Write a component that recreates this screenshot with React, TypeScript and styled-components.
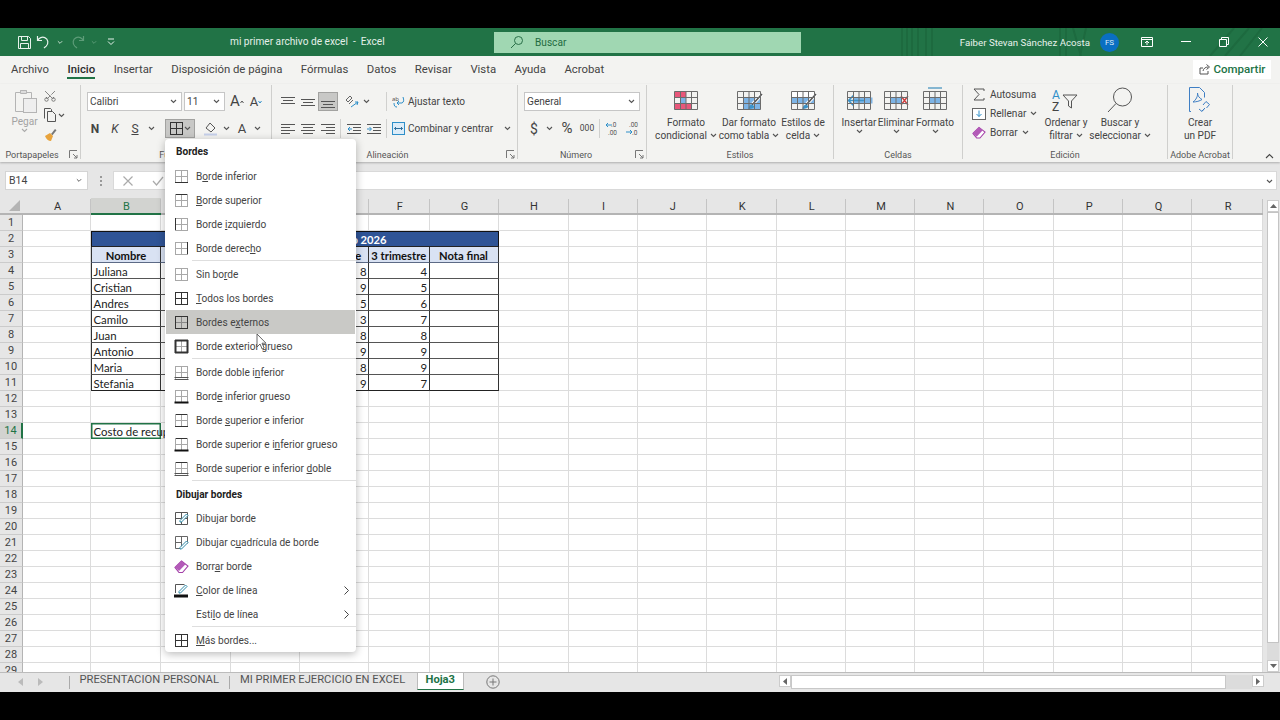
import React from 'react';
import styled, { createGlobalStyle } from 'styled-components';
import { Scissors } from 'lucide-react';

const UI = `"Roboto", "Noto Sans", sans-serif`;
const GREEN = '#217346';

const Global = createGlobalStyle`
    html, body { margin: 0; padding: 0; background: #000; overflow: hidden; }
    * { box-sizing: border-box; }
    u { text-underline-offset: 1px; text-decoration-thickness: 1px; }
`;

const Chev = ({ c = '#555', w = 7 }: { c?: string; w?: number }) => (
    <svg width={w} height={5} viewBox="0 0 7 5" fill="none">
        <path d="M1 1l2.5 2.5L6 1" stroke={c} strokeWidth="1.1" />
    </svg>
);

/* ---------- title bar ---------- */
const TitleBar = styled.div`
    position: relative;
    height: 28px;
    background: ${GREEN};
    display: flex;
    align-items: center;
    color: #fff;
    font-family: ${UI};
    font-size: 10.15px;
    overflow: hidden;
`;
const TitlePattern = styled.svg`
    position: absolute;
    left: 880px;
    top: 0;
    pointer-events: none;
`;
const Qat = styled.div`
    width: 230px;
    padding-left: 16px;
    display: flex;
    align-items: center;
    position: relative;
`;
const QatItem = styled.div<{ $w: number }>`
    width: ${(p) => p.$w}px;
    display: flex;
    align-items: center;
    justify-content: center;
`;
const DocTitle = styled.div`
    width: 264px;
    position: relative;
    white-space: pre;
    color: #e4f0e9;
    margin-top: -2px;
`;
const SearchBox = styled.div`
    width: 307px;
    height: 21px;
    background: #a0d7b2;
    display: flex;
    align-items: center;
    gap: 11px;
    padding-left: 16px;
    color: #1f6b40;
    position: relative;
`;
const TitleRight = styled.div`
    margin-left: auto;
    margin-right: -2px;
    display: flex;
    align-items: center;
    position: relative;
`;
const UserName = styled.div`
    color: #e8f2ec;
    font-size: 9.7px;
    white-space: nowrap;
`;
const Avatar = styled.div`
    width: 19px;
    height: 19px;
    margin-left: 10px;
    margin-right: 9px;
    border-radius: 50%;
    background: #0a6fc2;
    color: #dcecf8;
    font-size: 8px;
    display: flex;
    align-items: center;
    justify-content: center;
`;
const WinBtn = styled.div`
    width: 38.5px;
    display: flex;
    justify-content: center;
`;

/* ---------- menu tabs ---------- */
const TabsRow = styled.div`
    height: 28px;
    background: #f3f3f1;
    display: flex;
    align-items: center;
    gap: 18.5px;
    padding: 0 9px 3px 11px;
    font-family: ${UI};
    font-size: 11.35px;
    color: #444;
`;
const MenuTab = styled.div<{ $active?: boolean }>`
    position: relative;
    white-space: nowrap;
    font-weight: ${(p) => (p.$active ? 500 : 400)};
    color: ${(p) => (p.$active ? '#2b2b2b' : '#444')};
    ${(p) =>
        p.$active &&
        `&::after { content: ''; position: absolute; left: 0; right: 0; bottom: -3px; height: 2px; background: ${GREEN}; }`}
`;
const ShareBtn = styled.div`
    margin-left: auto;
    width: 78px;
    height: 19px;
    background: #fff;
    display: flex;
    align-items: center;
    justify-content: center;
    gap: 3px;
    font-weight: 500;
    font-size: 11.5px;
    color: ${GREEN};
    margin-top: 1px;
`;

/* ---------- ribbon ---------- */
const Ribbon = styled.div`
    height: 78px;
    background: #f3f3f1;
    display: flex;
    font-family: ${UI};
    font-size: 10.1px;
    color: #444;
    box-shadow: 0 1px 2px rgba(0, 0, 0, 0.25);
    position: relative;
    z-index: 1;
`;
const Group = styled.div<{ $w: number }>`
    width: ${(p) => p.$w}px;
    height: 74px;
    margin-top: 1px;
    border-right: 1px solid #cfcfcd;
    display: flex;
    flex-direction: column;
    position: relative;
    flex: none;
`;
const GroupBody = styled.div<{ $pl?: number }>`
    height: 62px;
    flex: none;
    display: flex;
    padding-left: ${(p) => p.$pl ?? 0}px;
`;
const GroupRows = styled.div`
    height: 62px;
    flex: none;
    display: flex;
    flex-direction: column;
    padding-top: 7px;
    gap: 8px;
`;
const ToolRow = styled.div<{ $pl?: number }>`
    height: 19px;
    display: flex;
    align-items: center;
    padding-left: ${(p) => p.$pl ?? 0}px;
`;
const GroupLabel = styled.div<{ $pr?: number }>`
    height: 12px;
    padding-right: ${(p) => p.$pr ?? 0}px;
    text-align: center;
    font-size: 9px;
    line-height: 16px;
    color: #555;
    white-space: nowrap;
`;
const Launcher = styled.svg`
    position: absolute;
    right: 2px;
    bottom: 0;
`;
const Tool = styled.div<{ $w: number; $on?: boolean; $ml?: number }>`
    width: ${(p) => p.$w}px;
    height: 19px;
    flex: none;
    margin-left: ${(p) => p.$ml ?? 0}px;
    display: flex;
    align-items: center;
    justify-content: center;
    background: ${(p) => (p.$on ? '#c8c8c6' : 'transparent')};
    border: ${(p) => (p.$on ? '1px solid #a2a2a0' : 'none')};
`;
const Select = styled.div<{ $w: number }>`
    width: ${(p) => p.$w}px;
    height: 19px;
    flex: none;
    margin-right: 2px;
    background: #fff;
    border: 1px solid #c6c6c6;
    padding: 0 4px 0 2px;
    display: flex;
    align-items: center;
    justify-content: space-between;
    color: #444;
`;
const VSep = styled.div<{ $ml?: number; $mr?: number }>`
    width: 1px;
    height: 19px;
    flex: none;
    margin-left: ${(p) => p.$ml ?? 2}px;
    margin-right: ${(p) => p.$mr ?? 2}px;
    background: #d0d0ce;
`;
const LetterTool = styled.span<{ $size?: number; $weight?: number; $italic?: boolean; $under?: boolean }>`
    font-size: ${(p) => p.$size ?? 12}px;
    font-weight: ${(p) => p.$weight ?? 400};
    font-style: ${(p) => (p.$italic ? 'italic' : 'normal')};
    text-decoration: ${(p) => (p.$under ? 'underline' : 'none')};
    color: #444;
    line-height: 1;
`;
const TextTool = styled.div<{ $ml?: number }>`
    display: flex;
    align-items: center;
    white-space: nowrap;
    gap: 3px;
    margin-left: ${(p) => p.$ml ?? 0}px;
`;
const Gap = styled.span<{ $w: number }>`
    width: ${(p) => p.$w}px;
    flex: none;
`;
const PasteCol = styled.div`
    width: 27px;
    display: flex;
    flex-direction: column;
    align-items: center;
    padding-top: 3px;
    color: #a3a3a3;
    line-height: 13px;
`;
const PasteLabel = styled.div`
    margin-top: 1px;
`;
const ClipStack = styled.div`
    margin-left: 5px;
    padding-top: 1px;
    display: flex;
    flex-direction: column;
`;
const ClipRow = styled.div`
    height: 19.5px;
    display: flex;
    align-items: center;
    gap: 1px;
`;
const RotatedScissors = styled(Scissors)`
    transform: rotate(-90deg);
`;
const BigBtn = styled.div<{ $w: number }>`
    width: ${(p) => p.$w}px;
    flex: none;
    display: flex;
    flex-direction: column;
    align-items: center;
    padding-top: 2px;
    text-align: center;
    line-height: 13px;
    white-space: nowrap;
`;
const BigIcon = styled.div`
    height: 26px;
    margin-bottom: 3px;
    display: flex;
    align-items: flex-end;
`;
const TableSvg = styled.svg`
    margin-bottom: 2.5px;
    flex: none;
`;
const EditStack = styled.div`
    width: 78px;
    padding-left: 9px;
    flex: none;
    display: flex;
    flex-direction: column;
`;
const EditRow = styled.div`
    height: 19px;
    display: flex;
    align-items: center;
    gap: 4px;
    white-space: nowrap;
`;
const EditIcon = styled.div`
    width: 14px;
    display: flex;
    justify-content: center;
    flex: none;
`;
const Collapse = styled.div`
    margin-left: auto;
    padding: 0 6px 1px 0;
    align-self: flex-end;
`;

/* ---------- formula bar ---------- */
const FormulaBar = styled.div`
    height: 28px;
    background: #e6e6e6;
    padding: 9px 3px 0 5px;
    display: flex;
    font-family: ${UI};
    font-size: 10.5px;
    color: #444;
`;
const NameBox = styled.div`
    width: 83px;
    height: 19px;
    background: #fff;
    border: 1px solid #d4d4d4;
    padding: 0 5px 0 3px;
    display: flex;
    align-items: center;
    justify-content: space-between;
`;
const GripDots = styled.div`
    width: 25px;
    height: 19px;
    display: flex;
    align-items: center;
    justify-content: center;
`;
const FormulaBox = styled.div`
    flex: 1;
    height: 19px;
    background: #fff;
    border: 1px solid #d9d9d9;
    display: flex;
    align-items: center;
    gap: 19px;
    padding: 0 3px 0 9px;
`;
const FormulaEnd = styled.div`
    margin-left: auto;
`;

/* ---------- sheet ---------- */
const SheetArea = styled.div`
    height: 482px;
    display: flex;
    background: #e6e6e6;
    overflow: hidden;
`;
const widths = [23, 68, 70, 69.5, 69, 69.5, 60.5, 69, 70, 69, 69.5, 69.5, 69.3, 69.7, 69, 69.5, 69.5, 69, 70.5];
const SheetGrid = styled.div`
    width: 1263px;
    flex: none;
    display: grid;
    grid-template-columns: ${widths.map((w) => `${w}px`).join(' ')};
    grid-template-rows: 24.5px repeat(29, 16.04px);
    background: #fff;
    font-family: "Lato", "Liberation Sans", sans-serif;
    font-size: 11.4px;
    color: #222;
`;
const Corner = styled.div`
    background: #e6e6e6;
    border-bottom: 2px solid #b4b4b4;
    display: flex;
    align-items: flex-end;
    justify-content: flex-end;
    padding: 0 3px 2px 0;
`;
const ColHead = styled.div<{ $on?: boolean }>`
    padding: 9px 0 0 1px;
    background:
        linear-gradient(#c4c4c4, #c4c4c4) right bottom / 1px 14px no-repeat,
        ${(p) => (p.$on ? 'linear-gradient(#e6e6e6 8px, #d2d3d0 8px)' : '#e6e6e6')};
    border-bottom: 2px solid ${(p) => (p.$on ? GREEN : '#b4b4b4')};
    color: ${(p) => (p.$on ? GREEN : '#333')};
    text-align: center;
    line-height: 15px;
    font-family: ${UI};
    font-size: 11px;
`;
const RowHead = styled.div<{ $on?: boolean }>`
    background: ${(p) => (p.$on ? '#d2d3d0' : '#e6e6e6')};
    border-bottom: 1px solid #cbcbcb;
    border-right: ${(p) => (p.$on ? `2px solid ${GREEN}` : '1px solid #b4b4b4')};
    color: ${(p) => (p.$on ? GREEN : '#444')};
    text-align: center;
    line-height: 16px;
    font-family: ${UI};
    font-size: 11px;
`;
const Cell = styled.div`
    border-right: 1px solid #dcdcdc;
    border-bottom: 1px solid #dcdcdc;
    line-height: 17px;
    padding: 0 2px;
    white-space: nowrap;
`;
const TitleCell = styled.div`
    grid-column: span 6;
    background: #2f5496;
    border: 1px solid #111;
    border-bottom-color: #222;
    color: #fff;
    font-weight: 700;
    font-size: 11.2px;
    line-height: 15px;
    text-align: right;
    padding-right: 111px;
`;
const TableHead = styled.div<{ $first?: boolean }>`
    background: #d9e2f3;
    border-right: 1px solid #333;
    border-left: ${(p) => (p.$first ? '1px solid #333' : 'none')};
    border-bottom: 1px solid #5c6a86;
    font-weight: 700;
    font-size: 11.2px;
    text-align: center;
    line-height: 17px;
    white-space: nowrap;
    color: #111;
`;
const TableCell = styled.div<{ $first?: boolean; $num?: boolean; $last?: boolean }>`
    border-right: 1px solid #333;
    border-left: ${(p) => (p.$first ? '1px solid #333' : 'none')};
    border-bottom: 1px solid ${(p) => (p.$last ? '#222' : '#555')};
    text-align: ${(p) => (p.$num ? 'right' : 'left')};
    padding: 0 1.5px;
    line-height: 17px;
    white-space: nowrap;
`;
const SelectedCell = styled(Cell)`
    border: none;
    box-shadow: inset 0 0 0 1.5px ${GREEN};
    padding: 0 2.5px;
`;

/* ---------- scrollbars and sheet tabs ---------- */
const VScroll = styled.div`
    width: 15px;
    margin-left: 2px;
    padding: 10px 1px 0 2px;
    display: flex;
    flex-direction: column;
    flex: none;
    height: 482px;
`;
const ScrollBtn = styled.div`
    width: 12px;
    height: 12px;
    flex: none;
    background: #fff;
    border: 1px solid #ccc;
    display: flex;
    align-items: center;
    justify-content: center;
`;
const VThumb = styled.div`
    height: 431px;
    flex: none;
    background: #fff;
    border: 1px solid #c4c4c4;
`;
const VTrack = styled.div`
    flex: 1;
    background: #dcdcdc;
`;
const BottomBar = styled.div`
    height: 20px;
    background: #e6e6e6;
    border-top: 1px solid #bcbcbc;
    display: flex;
    font-family: ${UI};
    font-size: 11.2px;
    color: #555;
`;
const SheetNav = styled.div`
    width: 69px;
    padding-left: 18px;
    gap: 15px;
    display: flex;
    align-items: center;
    height: 18px;
    flex: none;
`;
const SheetSep = styled.div`
    width: 1px;
    height: 13px;
    margin-top: 3px;
    flex: none;
    background: #aaa;
`;
const SheetTab = styled.div<{ $active?: boolean }>`
    height: 17px;
    padding: 0 10.5px 0 9.5px;
    line-height: 13px;
    white-space: nowrap;
    flex: none;
    ${(p) =>
        p.$active &&
        `background: #fff; color: ${GREEN}; font-weight: 700; margin-left: 1px; padding: 0; width: 47px; text-align: center; border-bottom: 1.5px solid ${GREEN}; border-left: 1px solid #bbb; border-right: 1px solid #bbb;`}
`;
const AddSheet = styled.div`
    margin-left: 22px;
    width: 14px;
    height: 18px;
    display: flex;
    align-items: center;
    flex: none;
`;
const HScroll = styled.div`
    margin-left: auto;
    margin-right: 16px;
    margin-top: 2px;
    width: 485px;
    height: 14px;
    display: flex;
    flex: none;
`;
const HThumb = styled.div`
    width: 435px;
    background: #fff;
    border: 1px solid #c8c8c8;
`;
const HTrack = styled.div`
    flex: 1;
    background: #dcdcdc;
`;

/* ---------- borders dropdown ---------- */
const DropMenu = styled.div`
    position: absolute;
    left: 165px;
    top: 139px;
    width: 191px;
    background: #fff;
    border-radius: 4px;
    box-shadow: 0 2px 9px rgba(0, 0, 0, 0.28);
    font-family: ${UI};
    font-size: 10.1px;
    color: #444;
    z-index: 5;
`;
const MenuHeader = styled.div<{ $h: number }>`
    height: ${(p) => p.$h}px;
    padding-left: 11px;
    font-weight: 700;
    color: #222;
    display: flex;
    align-items: center;
`;
const MenuItem = styled.div<{ $hover?: boolean }>`
    height: 24px;
    display: flex;
    align-items: center;
    margin: 0 1px;
    padding-left: 8px;
    white-space: nowrap;
    background: ${(p) => (p.$hover ? '#c9c9c6' : 'transparent')};
`;
const MenuIcon = styled.div`
    width: 15px;
    height: 15px;
    margin-right: 7px;
    flex: none;
`;
const MenuLabel = styled.span`
    white-space: pre;
`;
const MenuArrow = styled.div`
    margin-left: auto;
    padding-right: 6px;
    display: flex;
`;
const MenuSep = styled.div`
    height: 2px;
    margin-left: 27px;
    border-top: 1px solid #dedede;
`;
const Pointer = styled.svg`
    position: absolute;
    left: 256px;
    top: 333px;
    z-index: 6;
`;

const Page = styled.div`
    position: relative;
    width: 1280px;
    height: 720px;
    padding: 28px 0;
    background: #000;
`;

/* ---------- drawings ---------- */
type BorderKind = 'top' | 'bottom' | 'left' | 'right' | 'none' | 'all' | 'outer' | 'thickOuter' | 'doubleBottom'
    | 'thickBottom' | 'topBottom' | 'topThickBottom' | 'topDoubleBottom';

const BorderIcon = ({ kind, size = 15 }: { kind: BorderKind; size?: number }) => {
    const dark = '#333';
    const soft = '#a8a8a8';
    const all = kind === 'all';
    const boxed = all || kind === 'outer' || kind === 'thickOuter';
    const sw = kind === 'thickOuter' ? 2 : 1;
    const topDark = boxed || kind === 'top' || kind === 'topBottom' || kind === 'topThickBottom' || kind === 'topDoubleBottom';
    const bottomThick = kind === 'thickBottom' || kind === 'topThickBottom';
    const bottomDouble = kind === 'doubleBottom' || kind === 'topDoubleBottom';
    const bottomDark = boxed || kind === 'bottom' || kind === 'topBottom';
    const ln = (x1: number, y1: number, x2: number, y2: number, c: string, w = 1) => (
        <line x1={x1} y1={y1} x2={x2} y2={y2} stroke={c} strokeWidth={w} />
    );
    return (
        <svg width={size} height={size} viewBox="0 0 15 15">
            {ln(7.5, 2, 7.5, 13, all ? dark : kind === 'outer' ? '#888' : soft)}
            {ln(1, 7.5, 14, 7.5, all ? dark : kind === 'outer' ? '#888' : soft)}
            {ln(1, 1.5, 14, 1.5, topDark ? dark : soft, topDark ? sw : 1)}
            {ln(1.5, 1, 1.5, 14, boxed || kind === 'left' ? dark : soft, boxed ? sw : 1)}
            {ln(13.5, 1, 13.5, 14, boxed || kind === 'right' ? dark : soft, boxed ? sw : 1)}
            {!bottomThick && !bottomDouble && ln(1, 13.5, 14, 13.5, bottomDark ? dark : soft, bottomDark ? sw : 1)}
            {bottomThick && ln(0.5, 13.5, 14.5, 13.5, '#111', 2)}
            {bottomDouble && ln(0.5, 12.5, 14.5, 12.5, '#555', 1)}
            {bottomDouble && ln(0.5, 14.5, 14.5, 14.5, '#555', 1)}
        </svg>
    );
};

const Pencil = ({ x = 0, y = 0 }: { x?: number; y?: number }) => (
    <g transform={`translate(${x} ${y})`}>
        <path d="M1 8.5L7.5 2l1.5 1.5L2.5 10H1z" fill="#fff" stroke="#2f8aa8" strokeWidth="1" />
    </g>
);

const Eraser = () => (
    <svg width="15" height="15" viewBox="0 0 15 15">
        <path d="M1 8.5L7.5 2 14 7l-5.5 6.5H5z" fill="#fff" stroke="#a33fa8" strokeWidth="1.1" />
        <path d="M1 8.5L7.5 2l4 3.2L5 12z" fill="#b35ab8" />
    </svg>
);

const TableBase = ({ children, top }: { children?: React.ReactNode; top?: boolean }) => (
    <TableSvg width="28" height="26" viewBox="0 0 28 26" fill="none">
        {children}
        {top && <path d="M7 3h14" stroke="#3c8dbc" strokeWidth="1.2" />}
        <path d="M2.5 6.5h23v18h-23zM2.5 12.5h23M2.5 18.5h23M8.5 6.5v18M14 6.5v18M19.5 6.5v18" stroke="#6c6c6c" />
    </TableSvg>
);

const Brush = () => (
    <>
        <path d="M27 9L17 20" stroke="#fff" strokeWidth="3.4" />
        <path d="M27 9L17 20" stroke="#555" strokeWidth="1.6" />
        <path d="M17 19.5c-2 .3-3.5 2-3.5 4.5 3 0 5.6-.8 6-3z" fill="#3c93c9" />
    </>
);

const BigSheetIcon = ({ kind }: { kind: string }) => {
    if (kind === 'cond')
        return (
            <TableBase>
                <rect x="2.5" y="6.5" width="11.5" height="6" fill="#e8577a" />
                <rect x="2.5" y="18.5" width="17" height="6" fill="#e8577a" />
                <rect x="8.5" y="12.5" width="5.5" height="6" fill="#7db4e6" />
            </TableBase>
        );
    if (kind === 'table')
        return (
            <TableBase>
                <rect x="8.5" y="12.5" width="17" height="12" fill="#7db4e6" />
                <Brush />
            </TableBase>
        );
    if (kind === 'styles')
        return (
            <TableBase>
                <rect x="2.5" y="6.5" width="23" height="6" fill="#fff" />
                <rect x="2.5" y="12.5" width="23" height="6" fill="#7db4e6" />
                <Brush />
            </TableBase>
        );
    if (kind === 'insert')
        return (
            <TableBase>
                <rect x="8.5" y="12.5" width="19" height="6" fill="#7db4e6" />
                <path d="M20 15.5H4M8.5 10.5l-5 5 5 5" stroke="#3c93c9" strokeWidth="1.6" />
            </TableBase>
        );
    if (kind === 'delete')
        return (
            <TableBase>
                <rect x="8.5" y="12.5" width="11" height="6" fill="#7db4e6" />
                <path d="M19 11l7 9M26 11l-7 9" stroke="#cf3a3a" strokeWidth="1.3" />
            </TableBase>
        );
    return (
        <TableBase top>
            <rect x="8.5" y="12.5" width="11" height="6" fill="#7db4e6" />
        </TableBase>
    );
};

const CornerMark = () => (
    <svg width="11" height="11" viewBox="0 0 11 11">
        <path d="M11 0v11H0z" fill="#b4b4b4" />
    </svg>
);

const LaunchIcon = () => (
    <Launcher width="9" height="9" viewBox="0 0 9 9" fill="none">
        <path d="M.5 8V.5H8M4 4l4 4M8 5v3H5" stroke="#777" strokeWidth="1" />
    </Launcher>
);

const AlignLines = ({ rows }: { rows: [number, number][] }) => (
    <svg width="14" height="12" viewBox="0 0 14 12">
        {rows.map(([x, w], i) => (
            <rect key={i} x={x} y={i * 3 + 1} width={w} height="1" fill="#555" />
        ))}
    </svg>
);

const VAlign = ({ y }: { y: number }) => (
    <svg width="14" height="14" viewBox="0 0 14 14">
        <rect x="0" y={y} width="14" height="1" fill="#555" />
        <rect x="2" y={y + 3} width="10" height="1" fill="#555" />
        <rect x="0" y={y + 6} width="14" height="1" fill="#555" />
    </svg>
);

const IndentIcon = ({ flip }: { flip?: boolean }) => (
    <svg width="14" height="12" viewBox="0 0 14 12" fill="none">
        <path d="M0 1.5h14M6 4.5h8M6 7.5h8M0 10.5h14" stroke="#555" />
        <path d={flip ? 'M0 6h4M2.5 4L4.5 6l-2 2' : 'M5 6H1M3 4L1 6l2 2'} stroke="#2e8fc9" />
    </svg>
);

const borderRows: { label: React.ReactNode; kind: BorderKind; hover?: boolean }[][] = [
    [
        { kind: 'bottom', label: <>B<u>o</u>rde inferior</> },
        { kind: 'top', label: <><u>B</u>orde superior</> },
        { kind: 'left', label: <>Borde <u>i</u>zquierdo</> },
        { kind: 'right', label: <>Borde derec<u>h</u>o</> },
    ],
    [
        { kind: 'none', label: <>Sin bo<u>r</u>de</> },
        { kind: 'all', label: <><u>T</u>odos los bordes</> },
        { kind: 'outer', hover: true, label: <>Bordes e<u>x</u>ternos</> },
        { kind: 'thickOuter', label: <>Borde exterior <u>g</u>rueso</> },
    ],
    [
        { kind: 'doubleBottom', label: <>Borde doble i<u>n</u>ferior</> },
        { kind: 'thickBottom', label: <>Bord<u>e</u> inferior grueso</> },
        { kind: 'topBottom', label: <>Borde <u>s</u>uperior e inferior</> },
        { kind: 'topThickBottom', label: <>Borde superior e i<u>n</u>ferior grueso</> },
        { kind: 'topDoubleBottom', label: <>Borde superior e inferior <u>d</u>oble</> },
    ],
];

const colNames = 'ABCDEFGHIJKLMNOPQR'.split('');
const names = ['Juliana', 'Cristian', 'Andres', 'Camilo', 'Juan', 'Antonio', 'Maria', 'Stefania'];
const third = [8, 9, 5, 3, 8, 9, 8, 9];
const fourth = [4, 5, 6, 7, 8, 9, 9, 7];

const renderRow = (row: number) => {
    const cells: React.ReactNode[] = [
        <RowHead key={`h${row}`} $on={row === 14}>{row}</RowHead>,
    ];
    colNames.forEach((col, i) => {
        const key = `${col}${row}`;
        const inTable = i >= 1 && i <= 6;
        if (row === 2 && inTable) {
            if (i === 1) cells.push(<TitleCell key={key}>o 2026</TitleCell>);
            return;
        }
        if (row === 3 && inTable) {
            const heads: Record<string, string> = { B: 'Nombre', E: '2 trimestre', F: '3 trimestre', G: 'Nota final' };
            cells.push(<TableHead key={key} $first={i === 1}>{heads[col] ?? ''}</TableHead>);
            return;
        }
        if (row >= 4 && row <= 11 && inTable) {
            const n = row - 4;
            const value = col === 'B' ? names[n] : col === 'E' ? third[n] : col === 'F' ? fourth[n] : '';
            cells.push(
                <TableCell key={key} $first={i === 1} $num={col !== 'B'} $last={row === 11}>
                    {value}
                </TableCell>,
            );
            return;
        }
        if (row === 14 && col === 'B') {
            cells.push(<SelectedCell key={key}>Costo de recuperación</SelectedCell>);
            return;
        }
        cells.push(<Cell key={key} />);
    });
    return cells;
};

export default function App() {
    return (
        <Page>
            <Global />
            <TitleBar>
                <TitlePattern width="400" height="28" viewBox="0 0 400 28" fill="none">
                    <path d="M22 0v28M27 0v28M32 0v28M38 0v28M46 0v28M52 0v28M180 0v28M186 0v28M193 0l8 28M206 0l-6 28M330 28l24-28M345 28l24-28M360 28l22-28" stroke="#1d6a3f" strokeWidth="2" />
                </TitlePattern>
                <Qat>
                    <QatItem $w={16}>
                        <svg width="15" height="15" viewBox="0 0 15 15" fill="none" stroke="#e8f2ec">
                            <path d="M1.5 1.5h10l2 2v10h-12zM4.5 1.5v4h6v-4M3.5 13.5v-5h8v5" />
                        </svg>
                    </QatItem>
                    <QatItem $w={22}>
                        <svg width="14" height="14" viewBox="0 0 14 14" fill="none" stroke="#e8f2ec" strokeWidth="1.2">
                            <path d="M1.5 1v4.5H6M1.8 5.3C3 3 6 1.5 8.8 2.6c3.5 1.4 4 6 1.4 8.5L8 13" />
                        </svg>
                    </QatItem>
                    <QatItem $w={12}><Chev c="#cfe3d6" w={6} /></QatItem>
                    <QatItem $w={24}>
                        <svg width="14" height="14" viewBox="0 0 14 14" fill="none" stroke="#5d9c78" strokeWidth="1.2">
                            <path d="M12.5 1v4.5H8M12.2 5.3C11 3 8 1.5 5.2 2.6c-3.5 1.4-4 6-1.4 8.5L6 13" />
                        </svg>
                    </QatItem>
                    <QatItem $w={8}><Chev c="#5d9c78" w={6} /></QatItem>
                    <QatItem $w={26}>
                        <svg width="8" height="8" viewBox="0 0 8 8" fill="none" stroke="#e8f2ec">
                            <path d="M1 1h6M1 3.5l3 3 3-3" />
                        </svg>
                    </QatItem>
                </Qat>
                <DocTitle>mi primer archivo de excel  -  Excel</DocTitle>
                <SearchBox>
                    <svg width="14" height="14" viewBox="0 0 14 14" fill="none" stroke="#2a6f48">
                        <circle cx="8.5" cy="5.5" r="4" />
                        <path d="M5.5 8.5L1 13" />
                    </svg>
                    Buscar
                </SearchBox>
                <TitleRight>
                    <UserName>Faiber Stevan Sánchez Acosta</UserName>
                    <Avatar>FS</Avatar>
                    <WinBtn>
                        <svg width="12" height="10" viewBox="0 0 12 10" fill="none" stroke="#fff">
                            <path d="M.5.5h11v9H.5zM.5 2.5h11" />
                            <path d="M6 8V4M4 6l2-2 2 2" />
                        </svg>
                    </WinBtn>
                    <WinBtn>
                        <svg width="10" height="2" viewBox="0 0 10 2"><rect width="10" height="1" fill="#fff" /></svg>
                    </WinBtn>
                    <WinBtn>
                        <svg width="10" height="10" viewBox="0 0 10 10" fill="none" stroke="#fff">
                            <path d="M.5 2.5h7v7h-7zM2.5 2.5v-2h7v7h-2" />
                        </svg>
                    </WinBtn>
                    <WinBtn>
                        <svg width="10" height="10" viewBox="0 0 10 10" fill="none" stroke="#fff"><path d="M.5.5l9 9M9.5.5l-9 9" /></svg>
                    </WinBtn>
                </TitleRight>
            </TitleBar>

            <TabsRow>
                <MenuTab>Archivo</MenuTab>
                <MenuTab $active>Inicio</MenuTab>
                <MenuTab>Insertar</MenuTab>
                <MenuTab>Disposición de página</MenuTab>
                <MenuTab>Fórmulas</MenuTab>
                <MenuTab>Datos</MenuTab>
                <MenuTab>Revisar</MenuTab>
                <MenuTab>Vista</MenuTab>
                <MenuTab>Ayuda</MenuTab>
                <MenuTab>Acrobat</MenuTab>
                <ShareBtn>
                    <svg width="12" height="12" viewBox="0 0 12 12" fill="none" stroke="#555">
                        <path d="M1 5v6h8V8M1 5h3M4 8c.5-2.5 2.5-4 5-4M7.5 1.5L10.5 4 7.5 6.5" />
                    </svg>
                    Compartir
                </ShareBtn>
            </TabsRow>

            <Ribbon>
                <Group $w={81}>
                    <GroupBody $pl={11}>
                        <PasteCol>
                            <svg width="24" height="26" viewBox="0 0 24 26" fill="none" stroke="#b4b4b4">
                                <path d="M2.5 4.5h5v-2h6v2h5v6" />
                                <path d="M2.5 4.5v19h8" />
                                <path d="M7.5 2.5h6v3h-6z" fill="#dcdcdc" />
                                <rect x="10.5" y="10.5" width="13" height="14" fill="#eee" />
                            </svg>
                            <PasteLabel>Pegar</PasteLabel>
                            <Chev c="#aaa" />
                        </PasteCol>
                        <ClipStack>
                            <ClipRow><RotatedScissors size={14} color="#555" strokeWidth={1.2} /></ClipRow>
                            <ClipRow>
                                <svg width="14" height="14" viewBox="0 0 14 14" fill="none" stroke="#555">
                                    <path d="M1.5 10.5V.5h6l1 1v2M4.5 3.5h5l3 3v7h-8z" />
                                </svg>
                                <Chev />
                            </ClipRow>
                            <ClipRow>
                                <svg width="14" height="14" viewBox="0 0 14 14" fill="none">
                                    <path d="M8 6l4-5 1.5 1.2-4 5z" fill="#777" />
                                    <path d="M2 8l5-3 3 3-2 5c-2.5 0-5-2-6-5z" fill="#e8a33c" />
                                </svg>
                            </ClipRow>
                        </ClipStack>
                    </GroupBody>
                    <GroupLabel $pr={16}>Portapapeles</GroupLabel>
                    <LaunchIcon />
                </Group>

                <Group $w={191}>
                    <GroupRows>
                        <ToolRow $pl={6}>
                            <Select $w={95}>Calibri<Chev /></Select>
                            <Select $w={41}>11<Chev /></Select>
                            <Tool $w={20}><LetterTool $size={15}>A</LetterTool><svg width="4" height="4" viewBox="0 0 4 4" fill="none"><path d="M.5 3L2 1l1.5 2" stroke="#555" /></svg></Tool>
                            <Tool $w={18}><LetterTool $size={13}>A</LetterTool><svg width="4" height="4" viewBox="0 0 4 4" fill="none"><path d="M.5 1L2 3l1.5-2" stroke="#2e8fc9" /></svg></Tool>
                        </ToolRow>
                        <ToolRow $pl={4}>
                            <Tool $w={20}><LetterTool $weight={700}>N</LetterTool></Tool>
                            <Tool $w={20}><LetterTool $italic>K</LetterTool></Tool>
                            <Tool $w={20}><LetterTool $under>S</LetterTool></Tool>
                            <Tool $w={12}><Chev /></Tool>
                            <Tool $w={30} $on $ml={8}>
                                <BorderIcon kind="all" size={15} />
                                <Chev />
                            </Tool>
                            <Tool $w={20} $ml={6}>
                                <svg width="14" height="15" viewBox="0 0 14 15" fill="none">
                                    <path d="M6 2l5 5-4 4-5-4z" stroke="#555" />
                                    <rect x="0" y="12.5" width="13" height="2" fill="#c6d0ea" />
                                </svg>
                            </Tool>
                            <Tool $w={10}><Chev /></Tool>
                            <Tool $w={22}><LetterTool $size={13}>A</LetterTool></Tool>
                            <Tool $w={8}><Chev /></Tool>
                        </ToolRow>
                    </GroupRows>
                    <GroupLabel $pr={6}>Fuente</GroupLabel>
                </Group>

                <Group $w={246}>
                    <GroupRows>
                        <ToolRow $pl={6}>
                            <Tool $w={20}><VAlign y={2} /></Tool>
                            <Tool $w={20}><VAlign y={4} /></Tool>
                            <Tool $w={20} $on><VAlign y={6} /></Tool>
                            <Tool $w={20} $ml={4}>
                                <svg width="14" height="14" viewBox="0 0 14 14" fill="none">
                                    <path d="M1 5l4-4 2 2-4 4zM4 9l4-4" stroke="#666" />
                                    <path d="M6 12l7-5M13 7h-3M13 7l-1 3" stroke="#2e8fc9" />
                                </svg>
                            </Tool>
                            <Tool $w={8}><Chev /></Tool>
                            <VSep $ml={16} $mr={5} />
                            <TextTool>
                                <svg width="13" height="13" viewBox="0 0 13 13" fill="none">
                                    <text x="0" y="6" fontSize="6" fill="#555" fontFamily="Noto Sans">ab</text>
                                    <path d="M2 8c0 3 1 4 3 4M11 2c1 3 1 5-1 6H5M7 6L5 8l2 2" stroke="#2e8fc9" />
                                </svg>
                                Ajustar texto
                            </TextTool>
                        </ToolRow>
                        <ToolRow $pl={6}>
                            <Tool $w={20}><AlignLines rows={[[0, 14], [0, 9], [0, 14], [0, 9]]} /></Tool>
                            <Tool $w={20}><AlignLines rows={[[0, 14], [2, 10], [0, 14], [2, 10]]} /></Tool>
                            <Tool $w={20}><AlignLines rows={[[0, 14], [5, 9], [0, 14], [5, 9]]} /></Tool>
                            <VSep />
                            <Tool $w={21}><IndentIcon /></Tool>
                            <Tool $w={20}><IndentIcon flip /></Tool>
                            <VSep />
                            <TextTool $ml={3}>
                                <svg width="13" height="13" viewBox="0 0 13 13" fill="none">
                                    <rect x=".5" y=".5" width="12" height="12" stroke="#2e8fc9" fill="#dcecf8" />
                                    <path d="M2.5 6.5h8M4 5L2.5 6.5 4 8M9 5l1.5 1.5L9 8" stroke="#2e6f9c" />
                                </svg>
                                Combinar y centrar
                                <Gap $w={5} />
                                <Chev />
                            </TextTool>
                        </ToolRow>
                    </GroupRows>
                    <GroupLabel $pr={14}>Alineación</GroupLabel>
                    <LaunchIcon />
                </Group>

                <Group $w={129}>
                    <GroupRows>
                        <ToolRow $pl={6}>
                            <Select $w={116}>General<Chev /></Select>
                        </ToolRow>
                        <ToolRow $pl={6}>
                            <Tool $w={20}><LetterTool $size={14}>$</LetterTool></Tool>
                            <Tool $w={10}><Chev /></Tool>
                            <Tool $w={20} $ml={3}><LetterTool $size={15}>%</LetterTool></Tool>
                            <Tool $w={20}><LetterTool $size={8.5}>000</LetterTool></Tool>
                            <VSep />
                            <Tool $w={20}>
                                <svg width="14" height="15" viewBox="0 0 14 15" fill="none">
                                    <text x="6" y="6" fontSize="6.5" fill="#555" fontFamily="Roboto">.0</text>
                                    <text x="3" y="14" fontSize="6.5" fill="#555" fontFamily="Roboto">.00</text>
                                    <path d="M7 4H1M3 2L1 4l2 2" stroke="#2e8fc9" />
                                </svg>
                            </Tool>
                            <Tool $w={20}>
                                <svg width="14" height="15" viewBox="0 0 14 15" fill="none">
                                    <text x="4" y="6" fontSize="6.5" fill="#555" fontFamily="Roboto">.00</text>
                                    <text x="7" y="14" fontSize="6.5" fill="#555" fontFamily="Roboto">.0</text>
                                    <path d="M1 11h6M5 9l2 2-2 2" stroke="#2e8fc9" />
                                </svg>
                            </Tool>
                        </ToolRow>
                    </GroupRows>
                    <GroupLabel $pr={12}>Número</GroupLabel>
                    <LaunchIcon />
                </Group>

                <Group $w={187}>
                    <GroupBody $pl={6}>
                        <BigBtn $w={66}>
                            <BigIcon><BigSheetIcon kind="cond" /></BigIcon>
                            Formato
                            <TextTool>condicional <Chev /></TextTool>
                        </BigBtn>
                        <BigBtn $w={60}>
                            <BigIcon><BigSheetIcon kind="table" /></BigIcon>
                            Dar formato
                            <TextTool>como tabla <Chev /></TextTool>
                        </BigBtn>
                        <BigBtn $w={48}>
                            <BigIcon><BigSheetIcon kind="styles" /></BigIcon>
                            Estilos de
                            <TextTool>celda <Chev /></TextTool>
                        </BigBtn>
                    </GroupBody>
                    <GroupLabel>Estilos</GroupLabel>
                </Group>

                <Group $w={129}>
                    <GroupBody $pl={7}>
                        <BigBtn $w={36}>
                            <BigIcon><BigSheetIcon kind="insert" /></BigIcon>
                            Insertar
                            <TextTool><Chev /></TextTool>
                        </BigBtn>
                        <BigBtn $w={38}>
                            <BigIcon><BigSheetIcon kind="delete" /></BigIcon>
                            Eliminar
                            <TextTool><Chev /></TextTool>
                        </BigBtn>
                        <BigBtn $w={40}>
                            <BigIcon><BigSheetIcon kind="format" /></BigIcon>
                            Formato
                            <TextTool><Chev /></TextTool>
                        </BigBtn>
                    </GroupBody>
                    <GroupLabel>Celdas</GroupLabel>
                </Group>

                <Group $w={205}>
                    <GroupBody>
                        <EditStack>
                            <EditRow>
                                <EditIcon>
                                    <svg width="12" height="13" viewBox="0 0 12 13" fill="none"><path d="M11 3V1H1l5 5.5L1 12h10v-2" stroke="#555" /></svg>
                                </EditIcon>
                                Autosuma
                                <Gap $w={5} />
                                <Chev />
                            </EditRow>
                            <EditRow>
                                <EditIcon>
                                    <svg width="14" height="12" viewBox="0 0 14 12" fill="none">
                                        <rect x=".5" y=".5" width="13" height="11" stroke="#666" fill="#fff" />
                                        <path d="M7 2.5v6M4.5 6L7 8.5 9.5 6" stroke="#2e8fc9" />
                                    </svg>
                                </EditIcon>
                                Rellenar <Chev />
                            </EditRow>
                            <EditRow>
                                <EditIcon><Eraser /></EditIcon>
                                Borrar <Chev />
                            </EditRow>
                        </EditStack>
                        <BigBtn $w={50}>
                            <BigIcon>
                                <svg width="28" height="28" viewBox="0 0 28 28" fill="none">
                                    <text x="0" y="14" fontSize="12" fill="#2e8fc9" fontFamily="Roboto">A</text>
                                    <text x="0" y="26" fontSize="12" fill="#444" fontFamily="Roboto">Z</text>
                                    <path d="M11 10h14l-5.5 6v7l-3-2v-5z" stroke="#555" />
                                </svg>
                            </BigIcon>
                            Ordenar y
                            <TextTool>filtrar <Chev /></TextTool>
                        </BigBtn>
                        <BigBtn $w={58}>
                            <BigIcon>
                                <svg width="26" height="28" viewBox="0 0 26 28" fill="none" stroke="#555">
                                    <circle cx="15.5" cy="12" r="9" />
                                    <path d="M9 18.5L1 27" />
                                </svg>
                            </BigIcon>
                            Buscar y
                            <TextTool>seleccionar <Chev /></TextTool>
                        </BigBtn>
                    </GroupBody>
                    <GroupLabel>Edición</GroupLabel>
                </Group>

                <Group $w={65}>
                    <GroupBody>
                        <BigBtn $w={64}>
                            <BigIcon>
                                <svg width="24" height="27" viewBox="0 0 24 27" fill="none" stroke="#3f7fc4">
                                    <path d="M3 25.5H1.5v-24h10l5 5v5" />
                                    <path d="M5 16c3-2 5-6 4.5-9M5 16c3 0 7-1 9-2.5M9.5 7c0 3 2 5 4.5 6.5" />
                                    <path d="M11 23l3 2.5 2.5-3M15 19l3-3.5 3.5 3-3 3.5M14 25l3-3" />
                                </svg>
                            </BigIcon>
                            Crear
                            <span>un PDF</span>
                        </BigBtn>
                    </GroupBody>
                    <GroupLabel>Adobe Acrobat</GroupLabel>
                </Group>

                <Collapse>
                    <svg width="9" height="6" viewBox="0 0 9 6" fill="none"><path d="M1 5l3.5-3.5L8 5" stroke="#444" strokeWidth="1.1" /></svg>
                </Collapse>
            </Ribbon>

            <FormulaBar>
                <NameBox>B14<Chev w={6} /></NameBox>
                <GripDots>
                    <svg width="2" height="10" viewBox="0 0 2 10" fill="#999"><rect width="2" height="2" /><rect y="4" width="2" height="2" /><rect y="8" width="2" height="2" /></svg>
                </GripDots>
                <FormulaBox>
                    <svg width="10" height="10" viewBox="0 0 10 10" fill="none" stroke="#aaa" strokeWidth="1.2"><path d="M.5.5l9 9M9.5.5l-9 9" /></svg>
                    <svg width="12" height="10" viewBox="0 0 12 10" fill="none" stroke="#aaa" strokeWidth="1.2"><path d="M1 5l3.5 4L11 1" /></svg>
                    <FormulaEnd><Chev /></FormulaEnd>
                </FormulaBox>
            </FormulaBar>

            <SheetArea>
                <SheetGrid>
                    <Corner><CornerMark /></Corner>
                    {colNames.map((c) => (
                        <ColHead key={c} $on={c === 'B'}>{c}</ColHead>
                    ))}
                    {Array.from({ length: 29 }, (_, i) => renderRow(i + 1))}
                </SheetGrid>
                <VScroll>
                    <ScrollBtn><svg width="7" height="4" viewBox="0 0 7 4"><path d="M3.5 0L7 4H0z" fill="#666" /></svg></ScrollBtn>
                    <VThumb />
                    <VTrack />
                    <ScrollBtn><svg width="7" height="4" viewBox="0 0 7 4"><path d="M3.5 4L7 0H0z" fill="#666" /></svg></ScrollBtn>
                </VScroll>
            </SheetArea>

            <BottomBar>
                <SheetNav>
                    <svg width="5" height="8" viewBox="0 0 5 8"><path d="M5 0v8L0 4z" fill="#bbb" /></svg>
                    <svg width="5" height="8" viewBox="0 0 5 8"><path d="M0 0v8l5-4z" fill="#bbb" /></svg>
                </SheetNav>
                <SheetSep />
                <SheetTab>PRESENTACION PERSONAL</SheetTab>
                <SheetSep />
                <SheetTab>MI PRIMER EJERCICIO EN EXCEL</SheetTab>
                <SheetTab $active>Hoja3</SheetTab>
                <AddSheet>
                    <svg width="14" height="14" viewBox="0 0 14 14" fill="none" stroke="#777">
                        <circle cx="7" cy="7" r="6.2" />
                        <path d="M7 3.5v7M3.5 7h7" />
                    </svg>
                </AddSheet>
                <HScroll>
                    <ScrollBtn><svg width="4" height="7" viewBox="0 0 4 7"><path d="M4 0v7L0 3.5z" fill="#666" /></svg></ScrollBtn>
                    <HThumb />
                    <HTrack />
                    <ScrollBtn><svg width="4" height="7" viewBox="0 0 4 7"><path d="M0 0v7l4-3.5z" fill="#666" /></svg></ScrollBtn>
                </HScroll>
            </BottomBar>

            <DropMenu>
                <MenuHeader $h={25}>Bordes</MenuHeader>
                {borderRows.map((group, g) => (
                    <React.Fragment key={g}>
                        {group.map((item) => (
                            <MenuItem key={item.kind} $hover={item.hover}>
                                <MenuIcon><BorderIcon kind={item.kind} /></MenuIcon>
                                <MenuLabel>{item.label}</MenuLabel>
                            </MenuItem>
                        ))}
                        <MenuSep />
                    </React.Fragment>
                ))}
                <MenuHeader $h={24}>Dibujar bordes</MenuHeader>
                <MenuItem>
                    <MenuIcon>
                        <svg width="15" height="15" viewBox="0 0 15 15">
                            <path d="M1.5 1.5h12v12h-12zM1.5 7.5h12M7.5 1.5v12" fill="none" stroke="#555" />
                            <Pencil x={5} y={1} />
                        </svg>
                    </MenuIcon>
                    <MenuLabel>Dibu<u>j</u>ar borde</MenuLabel>
                </MenuItem>
                <MenuItem>
                    <MenuIcon>
                        <svg width="15" height="15" viewBox="0 0 15 15">
                            <path d="M1.5 1.5h12v7M1.5 1.5v12h6M1.5 7.5h6M7.5 1.5v12" fill="none" stroke="#666" />
                            <Pencil x={5} y={4} />
                        </svg>
                    </MenuIcon>
                    <MenuLabel>Dibujar c<u>u</u>adrícula de borde</MenuLabel>
                </MenuItem>
                <MenuItem>
                    <MenuIcon><Eraser /></MenuIcon>
                    <MenuLabel>Borr<u>a</u>r borde</MenuLabel>
                </MenuItem>
                <MenuItem>
                    <MenuIcon>
                        <svg width="15" height="15" viewBox="0 0 15 15">
                            <rect x="0" y="11.5" width="14" height="3" fill="#111" />
                            <path d="M1.5 10V1.5h9" fill="none" stroke="#555" />
                            <Pencil x={4} y={0} />
                        </svg>
                    </MenuIcon>
                    <MenuLabel><u>C</u>olor de línea</MenuLabel>
                    <MenuArrow>
                        <svg width="5" height="9" viewBox="0 0 5 9" fill="none"><path d="M.5.5l4 4-4 4" stroke="#444" /></svg>
                    </MenuArrow>
                </MenuItem>
                <MenuItem>
                    <MenuIcon />
                    <MenuLabel>Esti<u>l</u>o de línea</MenuLabel>
                    <MenuArrow>
                        <svg width="5" height="9" viewBox="0 0 5 9" fill="none"><path d="M.5.5l4 4-4 4" stroke="#444" /></svg>
                    </MenuArrow>
                </MenuItem>
                <MenuSep />
                <MenuItem>
                    <MenuIcon><BorderIcon kind="all" /></MenuIcon>
                    <MenuLabel><u>M</u>ás bordes...</MenuLabel>
                </MenuItem>
            </DropMenu>

            <Pointer width="11" height="18" viewBox="0 0 11 18">
                <path d="M1 1v13l3-3 2.2 5 2-1-2.2-4.8H10z" fill="#fff" stroke="#555" strokeWidth="0.9" />
            </Pointer>
        </Page>
    );
}
